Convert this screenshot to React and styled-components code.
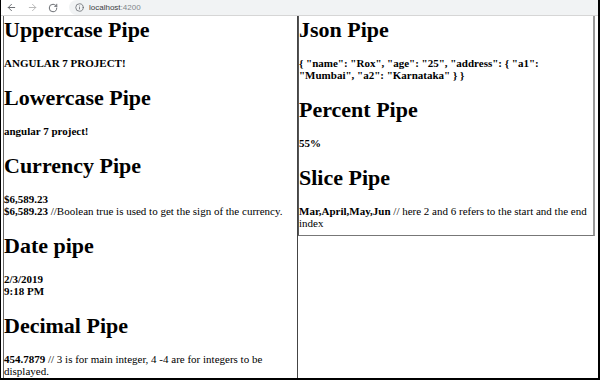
import React from "react";
import styled, { createGlobalStyle } from "styled-components";
import { ArrowLeft, ArrowRight, RotateCw, Info } from "lucide-react";

const Global = createGlobalStyle`
  html, body { margin: 0; padding: 0; background: #fff; }
  * { box-sizing: border-box; }
`;

const Frame = styled.div`
  width: 600px;
  height: 380px;
  overflow: hidden;
  display: flex;
  flex-direction: column;
  border-left: 1px solid #000;
  border-right: 2px solid #000;
  border-bottom: 2px solid #000;
  background: #fff;
`;

const Toolbar = styled.div`
  height: 16px;
  flex: none;
  display: flex;
  align-items: center;
  padding-left: 5px;
  gap: 10px;
  background: #fff;
  border-bottom: 1px solid #d6d6d6;
`;

const NavIcon = styled.span`
  display: flex;
  align-items: center;
  color: ${(p) => (p.$disabled ? "#b4b4b4" : "#5f6368")};
`;

const Omnibox = styled.div`
  flex: 1;
  align-self: flex-start;
  height: 15px;
  margin-left: 1px;
  display: flex;
  align-items: center;
  gap: 5px;
  padding-left: 6px;
  background: #f1f3f4;
  border-radius: 8px 0 0 8px;
  font-family: "Liberation Sans", Arial, sans-serif;
  font-size: 8px;
  color: #3c4043;
`;

const Port = styled.span`
  color: #80868b;
`;

const Content = styled.div`
  flex: 1;
  display: flex;
  align-items: flex-start;
  padding-left: 2px;
  min-height: 0;
`;

const Column = styled.div`
  width: ${(p) => p.$width}px;
  flex: none;
  font-family: "Liberation Serif", "Times New Roman", serif;
  font-size: 11px;
  color: #000;
  border: 1px solid #555;
  border-top: none;
  border-right: ${(p) => (p.$last ? "2px solid #999" : "1px solid #444")};
  border-left: ${(p) => (p.$last ? "1px solid #555" : "1px solid #666")};
  border-bottom-color: #777;
  min-height: ${(p) => (p.$last ? "auto" : "400px")};
  padding-bottom: ${(p) => (p.$last ? "6px" : "0")};
`;

const Heading = styled.h1`
  font-size: 22px;
  font-weight: bold;
  margin: 16px 0 14px;
  &:first-child {
    margin-top: 1px;
  }
`;

const Value = styled.b`
  font-weight: bold;
`;

export default function App() {
  return (
    <>
      <Global />
      <Frame>
        <Toolbar>
          <NavIcon>
            <ArrowLeft size={11} strokeWidth={2} />
          </NavIcon>
          <NavIcon $disabled>
            <ArrowRight size={11} strokeWidth={2} />
          </NavIcon>
          <NavIcon>
            <RotateCw size={10} strokeWidth={2.2} />
          </NavIcon>
          <Omnibox>
            <NavIcon>
              <Info size={9} strokeWidth={2} />
            </NavIcon>
            <span>
              localhost<Port>:4200</Port>
            </span>
          </Omnibox>
        </Toolbar>
        <Content>
          <Column $width={295}>
            <Heading>Uppercase Pipe</Heading>
            <Value>ANGULAR 7 PROJECT!</Value>
            <Heading>Lowercase Pipe</Heading>
            <Value>angular 7 project!</Value>
            <Heading>Currency Pipe</Heading>
            <Value>$6,589.23</Value>
            <br />
            <Value>$6,589.23</Value> //Boolean true is used to get the sign of the currency.
            <Heading>Date pipe</Heading>
            <Value>2/3/2019</Value>
            <br />
            <Value>9:18 PM</Value>
            <Heading>Decimal Pipe</Heading>
            <Value>454.7879</Value> // 3 is for main integer, 4 -4 are for integers to be displayed.
          </Column>
          <Column $width={297} $last>
            <Heading>Json Pipe</Heading>
            <Value>
              {'{ "name": "Rox", "age": "25", "address": { "a1": "Mumbai", "a2": "Karnataka" } }'}
            </Value>
            <Heading>Percent Pipe</Heading>
            <Value>55%</Value>
            <Heading>Slice Pipe</Heading>
            <Value>Mar,April,May,Jun</Value> // here 2 and 6 refers to the start and the end index
          </Column>
        </Content>
      </Frame>
    </>
  );
}
